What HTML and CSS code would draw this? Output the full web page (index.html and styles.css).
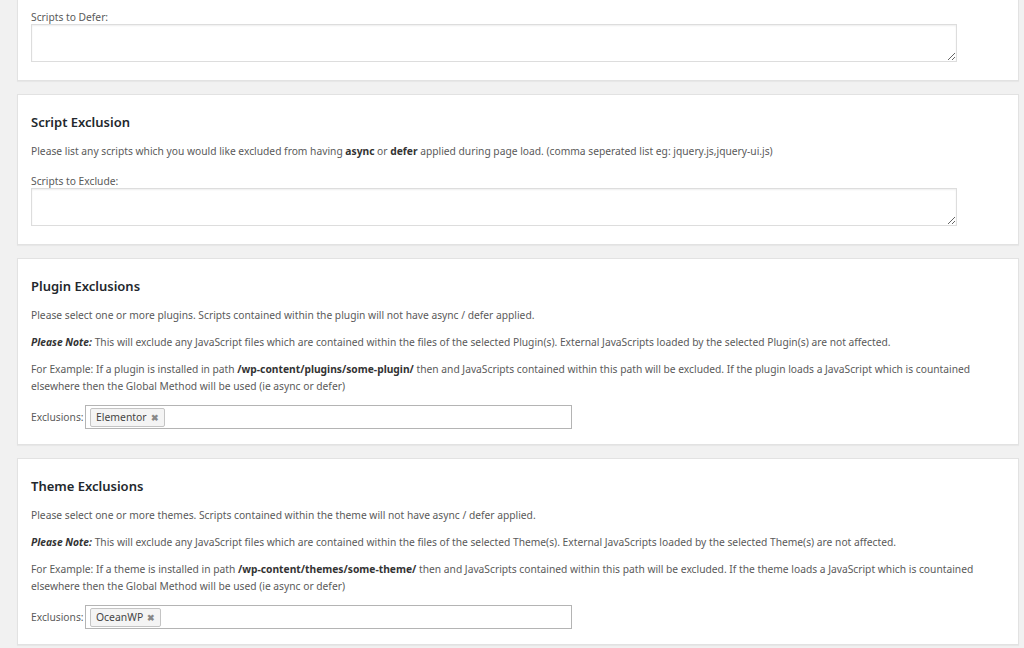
FILE: index.html
```html
<!DOCTYPE html>
<html lang="en">
<head>
    <meta charset="UTF-8">
    <title>Async JavaScript - Settings</title>
    <link rel="stylesheet" href="styles.css">
</head>
<body>
    <div class="wrap">
        <div class="postbox first">
            <label class="field-label">Scripts to Defer:</label>
            <textarea class="script-list"></textarea>
        </div>

        <div class="postbox">
            <h3 class="box-title">Script Exclusion</h3>
            <p>Please list any scripts which you would like excluded from having <b>async</b> or <b>defer</b> applied during page load. (comma seperated list eg: jquery.js,jquery-ui.js)</p>
            <label class="field-label spaced">Scripts to Exclude:</label>
            <textarea class="script-list"></textarea>
        </div>

        <div class="postbox">
            <h3 class="box-title">Plugin Exclusions</h3>
            <p>Please select one or more plugins. Scripts contained within the plugin will not have async / defer applied.</p>
            <p><b><i>Please Note:</i></b> This will exclude any JavaScript files which are contained within the files of the selected Plugin(s). External JavaScripts loaded by the selected Plugin(s) are not affected.</p>
            <p>For Example: If a plugin is installed in path <b>/wp-content/plugins/some-plugin/</b> then and JavaScripts contained within this path will be excluded. If the plugin loads a JavaScript which is countained elsewhere then the Global Method will be used (ie async or defer)</p>
            <div class="exclusion-row">
                <span class="row-label">Exclusions:</span>
                <div class="chosen-box">
                    <span class="choice">Elementor <span class="remove">&#10006;</span></span>
                </div>
            </div>
        </div>

        <div class="postbox">
            <h3 class="box-title">Theme Exclusions</h3>
            <p>Please select one or more themes. Scripts contained within the theme will not have async / defer applied.</p>
            <p><b><i>Please Note:</i></b> This will exclude any JavaScript files which are contained within the files of the selected Theme(s). External JavaScripts loaded by the selected Theme(s) are not affected.</p>
            <p>For Example: If a theme is installed in path <b>/wp-content/themes/some-theme/</b> then and JavaScripts contained within this path will be excluded. If the theme loads a JavaScript which is countained elsewhere then the Global Method will be used (ie async or defer)</p>
            <div class="exclusion-row">
                <span class="row-label">Exclusions:</span>
                <div class="chosen-box">
                    <span class="choice">OceanWP <span class="remove">&#10006;</span></span>
                </div>
            </div>
        </div>
    </div>
</body>
</html>
```

FILE: styles.css
```css
body {
    margin: 0;
    background-color: #f1f1f1;
    font-family: "Noto Sans", "Open Sans", Arial, sans-serif;
    font-size: 10.25px;
    color: #5a5a5a;
    overflow: hidden;
}
.wrap {
    padding: 0 5px 0 17px;
    margin-top: -20px;
}
.postbox {
    background-color: #fff;
    border: 1px solid #e2e2e2;
    box-shadow: 0 1px 1px rgba(0, 0, 0, 0.04);
    padding: 12px 13px 15px;
    margin-bottom: 13px;
}
.postbox.first {
    padding-top: 30px;
}
.box-title {
    font-size: 13px;
    font-weight: 600;
    color: #23282d;
    margin: 6px 0 12px;
}
p {
    margin: 0 0 10px;
    line-height: 17px;
}
b {
    color: #333;
}
.field-label {
    display: block;
    line-height: 13px;
}
.field-label.spaced {
    margin-top: 15px;
}
.script-list {
    display: block;
    width: 926px;
    height: 38px;
    box-sizing: border-box;
    border: 1px solid #ddd;
    box-shadow: inset 0 1px 2px rgba(0, 0, 0, 0.07);
    background: #fff;
    margin: 0 0 3px;
}
.exclusion-row {
    display: flex;
    align-items: center;
    margin-top: 10px;
}
.row-label {
    width: 54px;
}
.chosen-box {
    width: 487px;
    height: 24px;
    box-sizing: border-box;
    border: 1px solid #b4b4b4;
    background: #fff;
    display: flex;
    align-items: center;
    padding: 0 4px;
}
.choice {
    display: inline-flex;
    align-items: center;
    height: 19px;
    box-sizing: border-box;
    padding: 0 5px 0 5px;
    border: 1px solid #c4c4c4;
    border-radius: 2px;
    background: #f4f4f4;
    color: #444;
    font-size: 10.4px;
}
.remove {
    margin-left: 4px;
    font-size: 8.5px;
    font-weight: bold;
    color: #888;
}
```
